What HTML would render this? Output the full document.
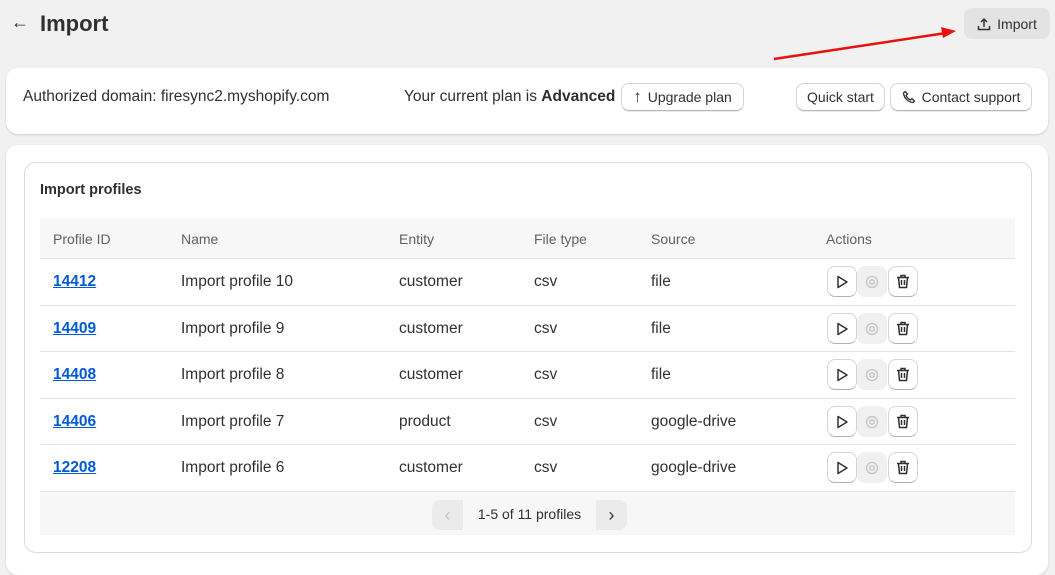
<!DOCTYPE html>
<html><head><style>
*{box-sizing:border-box;margin:0;padding:0}
body{width:1055px;height:561px;overflow:hidden;background:#f1f1f1;font-family:"Liberation Sans",sans-serif;color:#303030;font-size:15px;position:relative}
.abs{position:absolute}
.btn{position:absolute;background:#fff;border:1px solid #d4d4d4;border-bottom-color:#b8b8b8;border-radius:8px;height:28px;display:flex;align-items:center;justify-content:center;font-size:14px;color:#303030;box-shadow:0 1px 0 rgba(0,0,0,.08)}
.card{position:absolute;background:#fff;border-radius:12px;box-shadow:0 1px 2px rgba(0,0,0,.15)}
.row{position:absolute;left:40px;width:975px;height:47px;border-top:1px solid #e3e3e3;background:#fff;font-size:15.5px}
.row span{position:absolute;top:14px}
.row a{position:absolute;top:14px;left:13px;color:#005bd3;font-weight:bold;text-decoration:underline}
.ab{position:absolute;top:7px;width:30px;height:31px;border-radius:8px;display:flex;align-items:center;justify-content:center}
.w{background:#fff;border:1px solid #d4d4d4;border-bottom-color:#b0b0b0}
.g{background:#f0f0f0}
</style></head><body>
<div class="abs" style="left:11px;top:12px;font-size:18px">←</div>
<div class="abs" style="left:40px;top:11px;font-size:22px;font-weight:bold;color:#303030">Import</div>
<div class="abs" style="left:964px;top:8px;width:86px;height:31px;background:#e3e3e3;border-radius:8px;display:flex;align-items:center;justify-content:center;font-size:14px;gap:6px">
<svg width="14" height="14" viewBox="0 0 14 14" fill="none" stroke="#303030" stroke-width="1.4"><path d="M7 10V2M4 5l3-3 3 3M1.5 9v3.5h11V9"/></svg>Import</div>
<svg class="abs" style="left:770px;top:26px" width="190" height="40"><line x1="4" y1="33" x2="176" y2="7" stroke="#e8120c" stroke-width="2.5"/><path d="M186 5l-15-4 2 11z" fill="#e8120c"/></svg>

<div class="card" style="left:6px;top:68px;width:1042px;height:66px">
<div class="abs" style="left:17px;top:20px;font-size:15.5px">Authorized domain: firesync2.myshopify.com</div>
<div class="abs" style="left:398px;top:20px;font-size:15.5px">Your current plan is <b>Advanced</b></div>
<div class="btn" style="left:615px;top:15px;width:123px"><span style="margin-right:6px;font-size:17px">↑</span>Upgrade plan</div>
<div class="btn" style="left:790px;top:15px;width:89px">Quick start</div>
<div class="btn" style="left:884px;top:15px;width:142px"><svg width="14" height="14" viewBox="0 0 14 14" fill="none" stroke="#303030" stroke-width="1.3" style="margin-right:6px"><path d="M3 1.5l2.5 2.5-1.5 1.5c1 2 2.5 3.5 4.5 4.5L10 8.5l2.5 2.5-1.5 1.5C6 12 2 8 1.5 3z"/></svg>Contact support</div>
</div>

<div class="card" style="left:6px;top:145px;width:1042px;height:430px"></div>
<div class="abs" style="left:24px;top:162px;width:1008px;height:391px;border:1px solid #dcdcdc;border-radius:12px;background:#fff"></div>
<div class="abs" style="left:40px;top:182px;font-weight:bold;font-size:14.5px">Import profiles</div>
<div class="abs" style="left:40px;top:218px;width:975px;height:41px;background:#f7f7f7;color:#616161;font-size:14px">
<span class="abs" style="left:13px;top:13px">Profile ID</span><span class="abs" style="left:141px;top:13px">Name</span><span class="abs" style="left:359px;top:13px">Entity</span><span class="abs" style="left:494px;top:13px">File type</span><span class="abs" style="left:611px;top:13px">Source</span><span class="abs" style="left:786px;top:13px">Actions</span></div>

<div class="row" style="top:258px"><a>14412</a><span style="left:141px">Import profile 10</span><span style="left:359px">customer</span><span style="left:494px">csv</span><span style="left:611px">file</span>
<div class="ab w" style="left:787px"><svg width="14" height="14" viewBox="0 0 14 14" fill="none" stroke="#303030" stroke-width="1.5"><path d="M3 1.5v11l9-5.5z" stroke-linejoin="round"/></svg></div><div class="ab g" style="left:817px"><svg width="14" height="14" viewBox="0 0 14 14" fill="none" stroke="#c4c4c4" stroke-width="1.3"><circle cx="7" cy="7" r="5.5"/><rect x="5" y="5" width="4" height="4" rx="1"/></svg></div><div class="ab w" style="left:848px"><svg width="14" height="15" viewBox="0 0 14 15" fill="none" stroke="#303030" stroke-width="1.5"><path d="M1 3.5h12M5 3.5V1.5h4v2M2.5 3.5l1 10h7l1-10M5.5 6v5M8.5 6v5"/></svg></div></div>
<div class="row" style="top:305px"><a>14409</a><span style="left:141px">Import profile 9</span><span style="left:359px">customer</span><span style="left:494px">csv</span><span style="left:611px">file</span>
<div class="ab w" style="left:787px"><svg width="14" height="14" viewBox="0 0 14 14" fill="none" stroke="#303030" stroke-width="1.5"><path d="M3 1.5v11l9-5.5z" stroke-linejoin="round"/></svg></div><div class="ab g" style="left:817px"><svg width="14" height="14" viewBox="0 0 14 14" fill="none" stroke="#c4c4c4" stroke-width="1.3"><circle cx="7" cy="7" r="5.5"/><rect x="5" y="5" width="4" height="4" rx="1"/></svg></div><div class="ab w" style="left:848px"><svg width="14" height="15" viewBox="0 0 14 15" fill="none" stroke="#303030" stroke-width="1.5"><path d="M1 3.5h12M5 3.5V1.5h4v2M2.5 3.5l1 10h7l1-10M5.5 6v5M8.5 6v5"/></svg></div></div>
<div class="row" style="top:351px"><a>14408</a><span style="left:141px">Import profile 8</span><span style="left:359px">customer</span><span style="left:494px">csv</span><span style="left:611px">file</span>
<div class="ab w" style="left:787px"><svg width="14" height="14" viewBox="0 0 14 14" fill="none" stroke="#303030" stroke-width="1.5"><path d="M3 1.5v11l9-5.5z" stroke-linejoin="round"/></svg></div><div class="ab g" style="left:817px"><svg width="14" height="14" viewBox="0 0 14 14" fill="none" stroke="#c4c4c4" stroke-width="1.3"><circle cx="7" cy="7" r="5.5"/><rect x="5" y="5" width="4" height="4" rx="1"/></svg></div><div class="ab w" style="left:848px"><svg width="14" height="15" viewBox="0 0 14 15" fill="none" stroke="#303030" stroke-width="1.5"><path d="M1 3.5h12M5 3.5V1.5h4v2M2.5 3.5l1 10h7l1-10M5.5 6v5M8.5 6v5"/></svg></div></div>
<div class="row" style="top:398px"><a>14406</a><span style="left:141px">Import profile 7</span><span style="left:359px">product</span><span style="left:494px">csv</span><span style="left:611px">google-drive</span>
<div class="ab w" style="left:787px"><svg width="14" height="14" viewBox="0 0 14 14" fill="none" stroke="#303030" stroke-width="1.5"><path d="M3 1.5v11l9-5.5z" stroke-linejoin="round"/></svg></div><div class="ab g" style="left:817px"><svg width="14" height="14" viewBox="0 0 14 14" fill="none" stroke="#c4c4c4" stroke-width="1.3"><circle cx="7" cy="7" r="5.5"/><rect x="5" y="5" width="4" height="4" rx="1"/></svg></div><div class="ab w" style="left:848px"><svg width="14" height="15" viewBox="0 0 14 15" fill="none" stroke="#303030" stroke-width="1.5"><path d="M1 3.5h12M5 3.5V1.5h4v2M2.5 3.5l1 10h7l1-10M5.5 6v5M8.5 6v5"/></svg></div></div>
<div class="row" style="top:444px"><a>12208</a><span style="left:141px">Import profile 6</span><span style="left:359px">customer</span><span style="left:494px">csv</span><span style="left:611px">google-drive</span>
<div class="ab w" style="left:787px"><svg width="14" height="14" viewBox="0 0 14 14" fill="none" stroke="#303030" stroke-width="1.5"><path d="M3 1.5v11l9-5.5z" stroke-linejoin="round"/></svg></div><div class="ab g" style="left:817px"><svg width="14" height="14" viewBox="0 0 14 14" fill="none" stroke="#c4c4c4" stroke-width="1.3"><circle cx="7" cy="7" r="5.5"/><rect x="5" y="5" width="4" height="4" rx="1"/></svg></div><div class="ab w" style="left:848px"><svg width="14" height="15" viewBox="0 0 14 15" fill="none" stroke="#303030" stroke-width="1.5"><path d="M1 3.5h12M5 3.5V1.5h4v2M2.5 3.5l1 10h7l1-10M5.5 6v5M8.5 6v5"/></svg></div></div>

<div class="abs" style="left:40px;top:491px;width:975px;height:44px;background:#f7f7f7;border-top:1px solid #e3e3e3">
<div class="abs" style="left:392px;top:8px;width:31px;height:30px;background:#ebebeb;border-radius:8px 0 0 8px;color:#c4c4c4;text-align:center;line-height:30px;font-size:18px">‹</div>
<div class="abs" style="left:423px;top:14px;width:133px;text-align:center;font-size:14px">1-5 of 11 profiles</div>
<div class="abs" style="left:556px;top:8px;width:31px;height:30px;background:#ebebeb;border-radius:0 8px 8px 0;color:#303030;text-align:center;line-height:30px;font-size:18px">›</div>
</div>
</body></html>
